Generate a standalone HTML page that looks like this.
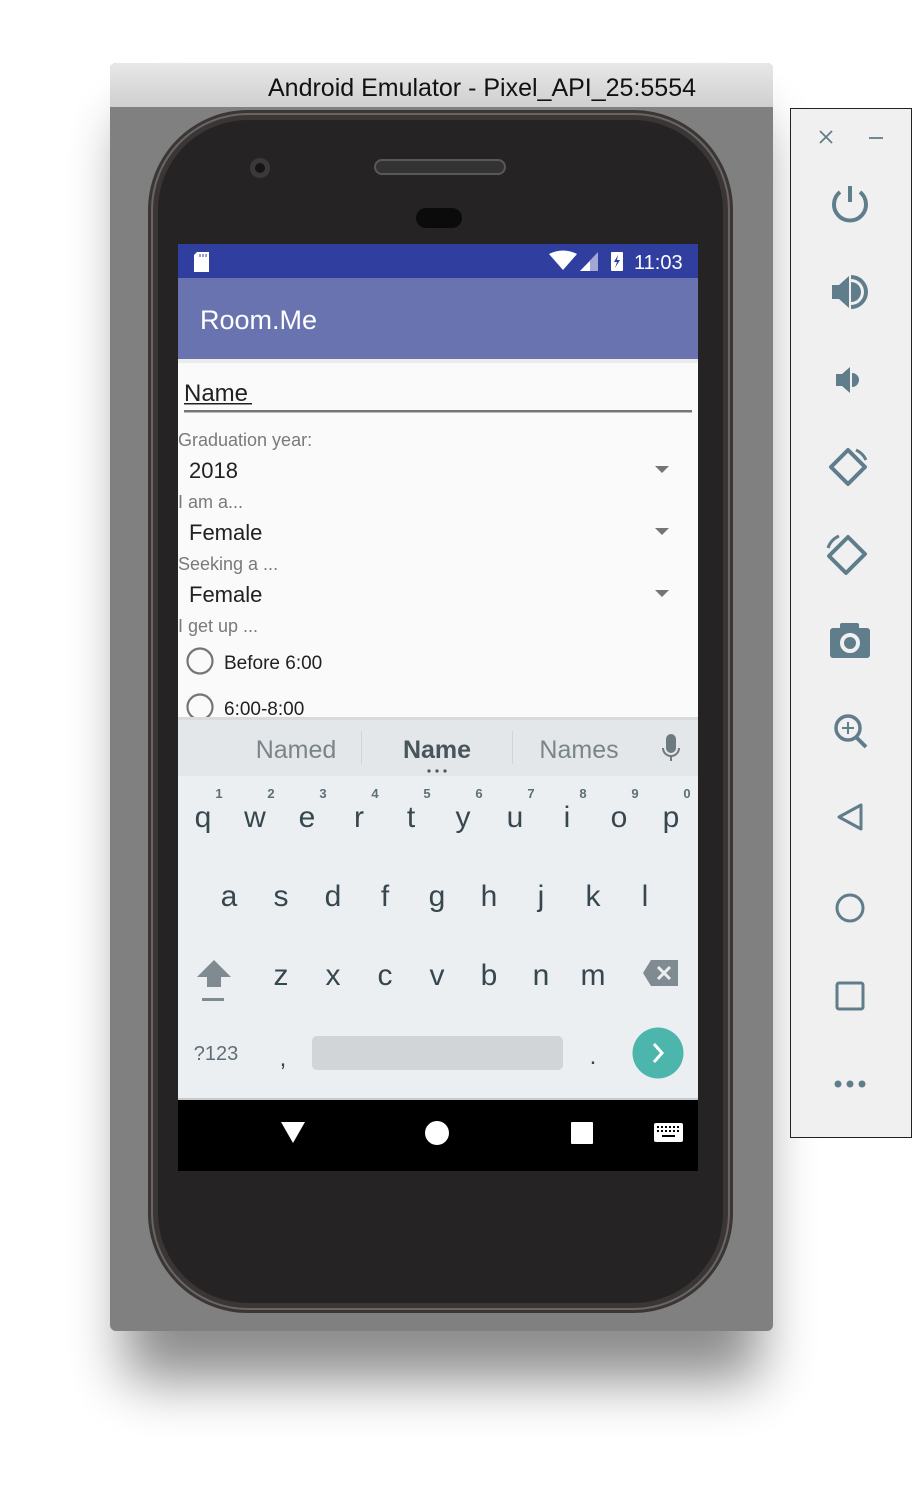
<!DOCTYPE html>
<html><head><meta charset="utf-8"><style>
html,body{margin:0;padding:0;background:#fff;width:912px;height:1490px;overflow:hidden}
svg{display:block}
text{font-family:"Liberation Sans",Arial,sans-serif}
</style></head><body>
<svg width="912" height="1490" viewBox="0 0 912 1490" xmlns="http://www.w3.org/2000/svg">
<defs>
<filter id="sh" x="-30%" y="-20%" width="160%" height="150%"><feGaussianBlur stdDeviation="28"/></filter>
<linearGradient id="tb" x1="0" y1="0" x2="0" y2="1"><stop offset="0" stop-color="#e8e8e8"/><stop offset="1" stop-color="#cfcfcf"/></linearGradient>
</defs>
<!-- window shadow -->
<rect x="125" y="120" width="635" height="1260" rx="10" fill="#000" opacity="0.45" filter="url(#sh)"/>
<!-- window -->
<rect x="110" y="63" width="663" height="1268" rx="6" fill="#808080"/>
<path d="M110 69 a6 6 0 0 1 6 -6 H767 a6 6 0 0 1 6 6 V107 H110Z" fill="url(#tb)"/>
<text x="482" y="96" font-size="25" text-anchor="middle" fill="#111">Android Emulator - Pixel_API_25:5554</text>
<!-- phone -->
<rect x="148" y="110" width="585" height="1203" rx="100" fill="#3a3635"/>
<rect x="152" y="114" width="577" height="1195" rx="96" fill="none" stroke="#6a6563" stroke-width="2"/>
<rect x="158" y="120" width="565" height="1183" rx="90" fill="#252323"/>
<circle cx="260" cy="168" r="10" fill="#3b3939"/><circle cx="260" cy="168" r="5" fill="#151515"/>
<rect x="375" y="160" width="130" height="14" rx="7" fill="#333" stroke="#5a5757" stroke-width="2"/>
<rect x="416" y="208" width="46" height="20" rx="10" fill="#0b0b0b"/>
<!-- screen -->
<rect x="178" y="244" width="520" height="34" fill="#303f9f"/>
<path d="M197 252 h12 v20 h-15 v-17z" fill="#fff"/>
<path d="M200 254v3M203 254v3M206 254v3" stroke="#303f9f" stroke-width="1"/>
<path d="M549 254 Q563 247 577 254 L563 270Z" fill="#fff"/>
<path d="M580 271 L598 252 V271Z" fill="#fff" opacity="0.55"/><path d="M580 271 L590 261 V271Z" fill="#fff"/>
<rect x="611" y="252" width="12" height="19" rx="1" fill="#fff"/><path d="M618 255 l-4 7 h3 l-2 6 l5 -8 h-3z" fill="#303f9f"/>
<text x="634" y="269" font-size="20" fill="#fff">11:03</text>
<rect x="178" y="278" width="520" height="81" fill="#6873b0"/>
<text x="200" y="329" font-size="27" fill="#fff">Room.Me</text>
<rect x="178" y="359" width="520" height="358" fill="#fafafa"/>
<rect x="178" y="359" width="520" height="4" fill="#000" opacity="0.06"/>
<text x="184" y="401" font-size="24" fill="#212121">Name</text>
<rect x="184" y="403" width="68" height="1.5" fill="#212121"/>
<rect x="184" y="410" width="508" height="2.5" fill="#757575"/>
<text x="178" y="446" font-size="18" fill="#7a7a7a">Graduation year:</text>
<text x="189" y="478" font-size="22" fill="#212121">2018</text>
<path d="M655 466 h14 l-7 7z" fill="#757575"/>
<text x="178" y="508" font-size="18" fill="#7a7a7a">I am a...</text>
<text x="189" y="540" font-size="22" fill="#212121">Female</text>
<path d="M655 528 h14 l-7 7z" fill="#757575"/>
<text x="178" y="570" font-size="18" fill="#7a7a7a">Seeking a ...</text>
<text x="189" y="602" font-size="22" fill="#212121">Female</text>
<path d="M655 590 h14 l-7 7z" fill="#757575"/>
<text x="178" y="632" font-size="18" fill="#7a7a7a">I get up ...</text>
<circle cx="200" cy="661" r="12.5" fill="none" stroke="#757575" stroke-width="2.2"/>
<text x="224" y="669" font-size="19" fill="#212121">Before 6:00</text>
<circle cx="200" cy="707" r="12.5" fill="none" stroke="#757575" stroke-width="2.2"/>
<text x="224" y="715" font-size="19" fill="#212121">6:00-8:00</text>
<!-- keyboard -->
<rect x="178" y="717" width="520" height="382" fill="#eceff1"/>
<rect x="178" y="717" width="520" height="59" fill="#e4e7e9"/>
<rect x="178" y="717" width="520" height="3" fill="#000" opacity="0.05"/>
<text x="296" y="758" font-size="25" fill="#7a8489" text-anchor="middle">Named</text>
<text x="437" y="758" font-size="25" font-weight="bold" fill="#48555b" text-anchor="middle">Name</text>
<text x="579" y="758" font-size="25" fill="#7a8489" text-anchor="middle">Names</text>
<rect x="361" y="731" width="1" height="33" fill="#cfd4d7"/><rect x="512" y="731" width="1" height="33" fill="#cfd4d7"/>
<circle cx="429" cy="771" r="1.6" fill="#48555b"/><circle cx="437" cy="771" r="1.6" fill="#48555b"/><circle cx="445" cy="771" r="1.6" fill="#48555b"/>
<rect x="666" y="734" width="10" height="19" rx="5" fill="#6d7a80"/><path d="M663 748 a8 8 0 0 0 16 0" fill="none" stroke="#6d7a80" stroke-width="2"/><rect x="670" y="756" width="2" height="5" fill="#6d7a80"/>
<g font-size="30" fill="#37474f" text-anchor="middle">
<text x="203" y="827">q</text><text x="255" y="827">w</text><text x="307" y="827">e</text><text x="359" y="827">r</text><text x="411" y="827">t</text><text x="463" y="827">y</text><text x="515" y="827">u</text><text x="567" y="827">i</text><text x="619" y="827">o</text><text x="671" y="827">p</text>
<text x="229" y="906">a</text><text x="281" y="906">s</text><text x="333" y="906">d</text><text x="385" y="906">f</text><text x="437" y="906">g</text><text x="489" y="906">h</text><text x="541" y="906">j</text><text x="593" y="906">k</text><text x="645" y="906">l</text>
<text x="281" y="985">z</text><text x="333" y="985">x</text><text x="385" y="985">c</text><text x="437" y="985">v</text><text x="489" y="985">b</text><text x="541" y="985">n</text><text x="593" y="985">m</text>
</g>
<g font-size="13" fill="#5f6f77" text-anchor="middle" font-weight="bold">
<text x="219" y="798">1</text><text x="271" y="798">2</text><text x="323" y="798">3</text><text x="375" y="798">4</text><text x="427" y="798">5</text><text x="479" y="798">6</text><text x="531" y="798">7</text><text x="583" y="798">8</text><text x="635" y="798">9</text><text x="687" y="798">0</text>
</g>
<path d="M214 960 l17 17 h-10 v10 h-14 v-10 h-10z" fill="#7f8b90"/>
<rect x="202" y="998" width="22" height="3" fill="#7f8b90"/>
<path d="M651 960 h27 v26 h-27 l-8 -13z" fill="#7f8b90"/>
<path d="M658 967 l12 12 M670 967 l-12 12" stroke="#eceff1" stroke-width="3"/>
<text x="216" y="1060" font-size="20" fill="#5f6f77" text-anchor="middle">?123</text>
<text x="283" y="1066" font-size="24" fill="#37474f" text-anchor="middle">,</text>
<rect x="312" y="1036" width="251" height="34" rx="5" fill="#d1d5d8"/>
<text x="593" y="1064" font-size="24" fill="#37474f" text-anchor="middle">.</text>
<circle cx="658" cy="1053" r="25.5" fill="#4db6ac"/>
<path d="M654 1044 l8 9 l-8 9" fill="none" stroke="#fff" stroke-width="3"/>
<rect x="178" y="1098" width="520" height="2" fill="#c8cbcd"/>
<rect x="178" y="1100" width="520" height="71" fill="#000"/>
<path d="M281 1122 h24 l-12 21z" fill="#fff"/>
<circle cx="437" cy="1133" r="12" fill="#fff"/>
<rect x="571" y="1122" width="22" height="22" rx="1" fill="#fff"/>
<rect x="654" y="1123" width="29" height="19" rx="2" fill="#fff"/>
<g fill="#000"><rect x="657" y="1126" width="2" height="2"/><rect x="661" y="1126" width="2" height="2"/><rect x="665" y="1126" width="2" height="2"/><rect x="669" y="1126" width="2" height="2"/><rect x="673" y="1126" width="2" height="2"/><rect x="677" y="1126" width="2" height="2"/><rect x="657" y="1130" width="2" height="2"/><rect x="661" y="1130" width="2" height="2"/><rect x="665" y="1130" width="2" height="2"/><rect x="669" y="1130" width="2" height="2"/><rect x="673" y="1130" width="2" height="2"/><rect x="677" y="1130" width="2" height="2"/><rect x="662" y="1135" width="13" height="2"/></g>
<!-- side panel -->
<rect x="790.5" y="108.5" width="121" height="1029" fill="#f0f0f0" stroke="#222" stroke-width="1"/>
<g stroke="#607d8b" fill="none" stroke-width="2.5">
<path d="M820 131 l12 12 M832 131 l-12 12" stroke-width="1.8"/>
<path d="M869 138 h14" stroke-width="1.8"/>
<path d="M850 186 v16" stroke-width="4"/>
<path d="M840 192 a16 16 0 1 0 20 0" stroke-width="4"/>
</g>
<g fill="#607d8b">
<path d="M832 285 h7 l10 -9 v32 l-10 -9 h-7z"/>
<path d="M851 282 a10 10 0 0 1 0 20z"/><path d="M851 275 a17 17 0 0 1 0 34 v-4 a13 13 0 0 0 0 -26z"/>
<path d="M836 374 h6 l8 -7 v26 l-8 -7 h-6z"/><path d="M852 373 a7 7 0 0 1 0 14z"/>
</g>
<g stroke="#607d8b" fill="none" stroke-width="4" stroke-linejoin="round">
<path d="M831 467 l17 -17 l17 17 l-17 17z"/>
<path d="M856 450 a20 20 0 0 1 10 10" stroke-width="3"/>
<path d="M829 556 l19 -19 l17 17 l-19 19z"/>
<path d="M828 548 a20 20 0 0 1 11 -12" stroke-width="3"/>
</g>
<rect x="830" y="628" width="40" height="30" rx="3" fill="#607d8b"/><rect x="840" y="623" width="19" height="8" rx="2" fill="#607d8b"/>
<circle cx="850" cy="643" r="8" fill="none" stroke="#f0f0f0" stroke-width="4"/>
<g stroke="#607d8b" fill="none" stroke-width="3.5">
<circle cx="848" cy="728" r="12"/><path d="M856 737 l10 10" stroke-width="4"/>
<path d="M842 728 h12 M848 722 v12" stroke-width="2"/>
<path d="M861 805 v24 l-22 -12z" stroke-width="3" stroke-linejoin="round"/>
<circle cx="850" cy="908" r="13" stroke-width="3"/>
<rect x="837" y="983" width="26" height="26" rx="2" stroke-width="3"/>
</g>
<g fill="#607d8b"><circle cx="838" cy="1084" r="3.5"/><circle cx="850" cy="1084" r="3.5"/><circle cx="862" cy="1084" r="3.5"/></g>
</svg>
</body></html>
